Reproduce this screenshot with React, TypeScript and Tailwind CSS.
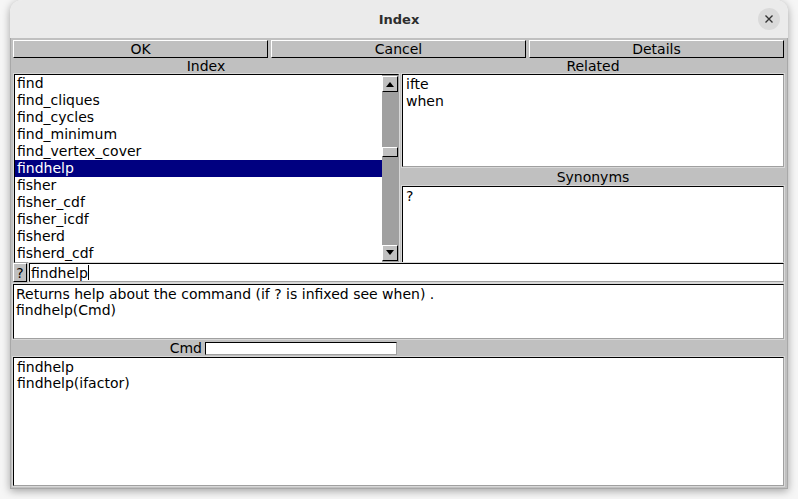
import React from "react";

const indexItems = [
  "find",
  "find_cliques",
  "find_cycles",
  "find_minimum",
  "find_vertex_cover",
  "findhelp",
  "fisher",
  "fisher_cdf",
  "fisher_icdf",
  "fisherd",
  "fisherd_cdf",
];

const sunken = "border-t border-l border-t-black border-l-black border-b border-r border-b-[#a0a0a0] border-r-[#a0a0a0] outline outline-1 outline-[#d8d8d8]";

function Button({ label }: { label: string }) {
  return (
    <div className="h-[18px] flex items-center justify-center bg-[#c0c0c0] border-t border-l border-t-white border-l-white border-b border-r border-b-black border-r-black text-[14px] leading-none text-black">
      {label}
    </div>
  );
}

function ArrowButton({ up }: { up: boolean }) {
  return (
    <div className="w-[16px] h-[16px] bg-[#c0c0c0] flex items-center justify-center border-t border-l border-t-white border-l-white border-b border-r border-b-black border-r-black">
      <svg width="10" height="6" viewBox="0 0 10 6">
        {up ? <polygon points="1,6 9,6 5,1" fill="#000" /> : <polygon points="1,0 9,0 5,5" fill="#000" />}
      </svg>
    </div>
  );
}

export default function App() {
  return (
    <div className="w-[798px] h-[499px] bg-[#f6f6f6] px-[10px] overflow-hidden" style={{ fontFamily: '"DejaVu Sans", sans-serif' }}>
      <div className="w-[778px] h-[489px] rounded-t-[12px] flex flex-col shadow-[0_2px_8px_rgba(0,0,0,0.35)] overflow-hidden">
        {/* title bar */}
        <div className="h-[38px] bg-[#ebebeb] relative flex items-center justify-center shrink-0">
          <span className="text-[13px] font-bold text-[#2e2e2e] mt-[1px]">Index</span>
          <div className="absolute right-[8px] top-[8px] w-[22px] h-[22px] rounded-full bg-[#dadada] flex items-center justify-center">
            <svg width="10" height="10" viewBox="0 0 10 10">
              <path d="M1.5 1.5 L8.5 8.5 M8.5 1.5 L1.5 8.5" stroke="#333" strokeWidth="1.4" />
            </svg>
          </div>
        </div>

        {/* body */}
        <div className="flex-1 bg-[#c0c0c0] flex flex-col pl-[2px] pr-[3px] pt-[2px] border-l border-r border-b border-[#a8a8a8] text-[14px] text-black">
          <div className="grid grid-cols-3 gap-[3px]">
            <Button label="OK" />
            <Button label="Cancel" />
            <Button label="Details" />
          </div>

          <div className="grid grid-cols-[386px_1fr] gap-[3px] h-[16px] items-center leading-none">
            <div className="text-center">Index</div>
            <div className="text-center">Related</div>
          </div>

          <div className="flex gap-[3px] h-[189px]">
            {/* index list */}
            <div className={`w-[385px] ml-[1px] bg-white flex ${sunken}`}>
              <div className="flex-1 flex flex-col">
                {indexItems.map((it) => (
                  <div
                    key={it}
                    className={`h-[17px] leading-[17px] pl-[2px] ${it === "findhelp" ? "bg-[#000080] text-white" : ""}`}
                  >
                    {it}
                  </div>
                ))}
              </div>
              <div className="w-[16px] bg-[#a0a0a0] flex flex-col pt-[1px] pb-[1px]">
                <ArrowButton up />
                <div className="flex-1 relative">
                  <div className="absolute left-0 top-[55px] w-[16px] h-[10px] bg-[#c0c0c0] border-t border-l border-t-white border-l-white border-b border-r border-b-black border-r-black" />
                </div>
                <ArrowButton up={false} />
              </div>
            </div>

            {/* right column */}
            <div className="flex-1 flex flex-col">
              <div className={`h-[93px] bg-white flex flex-col pl-[3px] pt-[1px] leading-[17px] ${sunken}`}>
                <div>ifte</div>
                <div>when</div>
              </div>
              <div className="h-[19px] flex items-center justify-center leading-none">Synonyms</div>
              <div className={`flex-1 bg-white pl-[3px] pt-[1px] leading-[17px] ${sunken}`}>?</div>
            </div>
          </div>

          {/* search row */}
          <div className="flex gap-[2px] h-[19px]">
            <div className="w-[14px] bg-[#c0c0c0] flex items-center justify-center border-t border-l border-t-white border-l-white border-b border-r border-b-black border-r-black leading-none">?</div>
            <div className={`flex-1 bg-white flex items-center pl-[1px] ${sunken}`}>
              <span className="leading-none">findhelp</span>
              <span className="w-[1px] h-[15px] bg-black" />
            </div>
          </div>

          {/* description */}
          <div className={`h-[55px] mt-[2px] bg-white pl-[2px] pt-[1px] leading-[16px] ${sunken}`}>
            <div>Returns help about the command (if ? is infixed see when) .</div>
            <div>findhelp(Cmd)</div>
          </div>

          {/* cmd row */}
          <div className="h-[18px] flex items-center">
            <div className="w-[384px] flex items-center justify-end gap-[3px]">
              <span className="leading-none">Cmd</span>
              <div className="w-[192px] h-[13px] bg-white border-t border-l border-t-black border-l-black border-b border-r border-b-[#a0a0a0] border-r-[#a0a0a0]" />
            </div>
          </div>

          {/* commands list */}
          <div className={`flex-1 mb-[2px] bg-white pl-[3px] pt-[1px] leading-[16px] ${sunken}`}>
            <div>findhelp</div>
            <div>findhelp(ifactor)</div>
          </div>
        </div>
      </div>
    </div>
  );
}
